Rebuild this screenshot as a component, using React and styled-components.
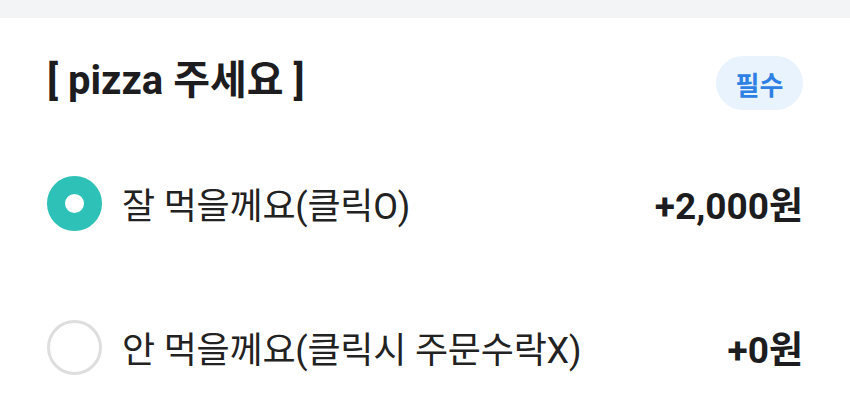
import React, { useState } from "react";
import styled, { createGlobalStyle } from "styled-components";

const GlobalStyle = createGlobalStyle`
  body {
    margin: 0;
    background: #fff;
    font-family: Roboto, "Noto Sans CJK KR", sans-serif;
  }
`;

const TopBar = styled.div`
  height: 18px;
  background-color: #f2f4f6;
`;

const Section = styled.section`
  padding: 37px 47px 0 47px;
`;

const Header = styled.div`
  display: flex;
  align-items: center;
  justify-content: space-between;
  height: 56px;
`;

const Title = styled.h2`
  margin: 0;
  font-size: 40px;
  font-weight: 700;
  color: #1d1d1f;
  line-height: 1;
  padding-bottom: 4px;
`;

const Badge = styled.span`
  display: flex;
  align-items: center;
  justify-content: center;
  width: 87px;
  height: 54px;
  border-radius: 27px;
  background-color: #e9f3fd;
  color: #2f80e4;
  font-size: 26px;
  font-weight: 700;
`;

const OptionList = styled.div`
  display: flex;
  flex-direction: column;
  gap: 88px;
  margin-top: 64px;
`;

const Option = styled.label`
  display: flex;
  align-items: center;
  height: 56px;
  cursor: pointer;
`;

const Radio = styled.span`
  box-sizing: border-box;
  flex: none;
  width: 55px;
  height: 55px;
  border-radius: 50%;
  border: ${(p) => (p.checked ? "18.5px solid #2dc1b7" : "3.5px solid #dedede")};
  background-color: #fff;
`;

const Label = styled.span`
  flex: 1;
  margin-left: 20px;
  font-size: 36px;
  color: #222;
  letter-spacing: -0.2px;
`;

const Price = styled.span`
  font-size: 37px;
  font-weight: 700;
  color: #1d1d1f;
`;

const options = [
  { id: 1, label: "잘 먹을께요(클릭O)", price: "+2,000원" },
  { id: 2, label: "안 먹을께요(클릭시 주문수락X)", price: "+0원" },
];

export default function App() {
  const [selected, setSelected] = useState(1);

  return (
    <>
      <GlobalStyle />
      <TopBar />
      <Section>
        <Header>
          <Title>[ pizza 주세요 ]</Title>
          <Badge>필수</Badge>
        </Header>
        <OptionList>
          {options.map((opt) => (
            <Option key={opt.id} onClick={() => setSelected(opt.id)}>
              <Radio checked={selected === opt.id} />
              <Label>{opt.label}</Label>
              <Price>{opt.price}</Price>
            </Option>
          ))}
        </OptionList>
      </Section>
    </>
  );
}
